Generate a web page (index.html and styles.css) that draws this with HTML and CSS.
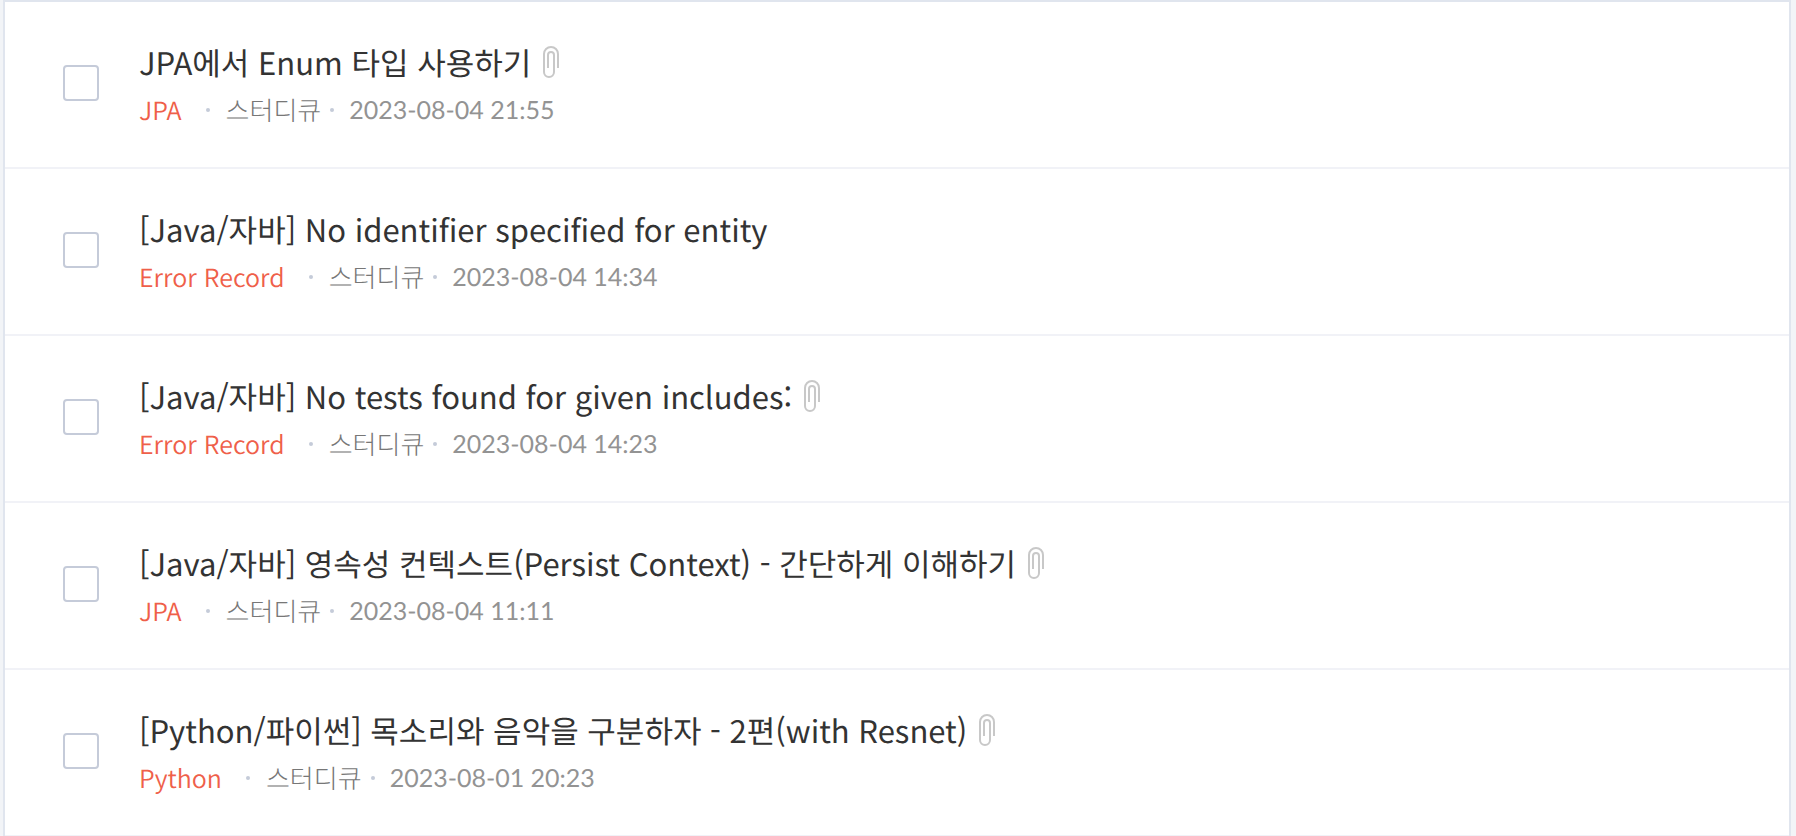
FILE: index.html
```html
<!DOCTYPE html>
<html lang="ko">
<head>
<meta charset="utf-8">
<title>글 관리</title>
<link rel="stylesheet" href="styles.css">
</head>
<body>
<svg class="sprite" aria-hidden="true">
  <symbol id="clip" viewBox="0 0 16 32">
    <path d="M15 22V8A7 7 0 0 0 1 8V26A5 5 0 0 0 11 26V9A3 3 0 0 0 5 9V22"/>
  </symbol>
</svg>
<ul class="posts">
  <li class="post">
    <input class="check" type="checkbox" aria-labelledby="post-1">
    <div class="body">
      <div class="head">
        <a class="title" id="post-1" href="#">JPA에서 Enum 타입 사용하기</a>
        <svg class="clip" aria-hidden="true"><use href="#clip"/></svg>
      </div>
      <div class="meta">
        <a class="cat" href="#">JPA</a>
        <span class="author">스터디큐</span>
        <span class="date">2023-08-04 21:55</span>
      </div>
    </div>
  </li>
  <li class="post">
    <input class="check" type="checkbox" aria-labelledby="post-2">
    <div class="body">
      <div class="head">
        <a class="title" id="post-2" href="#">[Java/자바] No identifier specified for entity</a>
      </div>
      <div class="meta">
        <a class="cat" href="#">Error Record</a>
        <span class="author">스터디큐</span>
        <span class="date">2023-08-04 14:34</span>
      </div>
    </div>
  </li>
  <li class="post">
    <input class="check" type="checkbox" aria-labelledby="post-3">
    <div class="body">
      <div class="head">
        <a class="title" id="post-3" href="#">[Java/자바] No tests found for given includes:</a>
        <svg class="clip" aria-hidden="true"><use href="#clip"/></svg>
      </div>
      <div class="meta">
        <a class="cat" href="#">Error Record</a>
        <span class="author">스터디큐</span>
        <span class="date">2023-08-04 14:23</span>
      </div>
    </div>
  </li>
  <li class="post">
    <input class="check" type="checkbox" aria-labelledby="post-4">
    <div class="body">
      <div class="head">
        <a class="title" id="post-4" href="#">[Java/자바] 영속성 컨텍스트(Persist Context) - 간단하게 이해하기</a>
        <svg class="clip" aria-hidden="true"><use href="#clip"/></svg>
      </div>
      <div class="meta">
        <a class="cat" href="#">JPA</a>
        <span class="author">스터디큐</span>
        <span class="date">2023-08-04 11:11</span>
      </div>
    </div>
  </li>
  <li class="post">
    <input class="check" type="checkbox" aria-labelledby="post-5">
    <div class="body">
      <div class="head">
        <a class="title" id="post-5" href="#">[Python/파이썬] 목소리와 음악을 구분하자 - 2편(with Resnet)</a>
        <svg class="clip" aria-hidden="true"><use href="#clip"/></svg>
      </div>
      <div class="meta">
        <a class="cat" href="#">Python</a>
        <span class="author">스터디큐</span>
        <span class="date">2023-08-01 20:23</span>
      </div>
    </div>
  </li>
</ul>
</body>
</html>
```
FILE: styles.css
```css
* { box-sizing: border-box; }
body {
  margin: 0;
  padding: 0 5px 0 3px;
  background: #f2f4f7;
  font-family: "Noto Sans CJK KR", "Noto Sans", sans-serif;
  text-rendering: geometricPrecision;
}
.sprite { position: absolute; width: 0; height: 0; }
.posts {
  margin: 0;
  padding: 0;
  list-style: none;
  background: #fff;
  border: 2px solid #e0e5ee;
  border-bottom: 0;
}
.post {
  display: flex;
  align-items: flex-start;
  gap: 40px;
  padding: 34px 58px 35px;
  border-bottom: 2px solid #f1f2f7;
}
.check {
  appearance: none;
  flex: none;
  width: 36px;
  height: 36px;
  margin: 29px 0 0;
  border: 2px solid #c5cbd9;
  border-radius: 4px;
  background: #fff;
}
.check:checked { background: #c5cbd9; }
.head { display: flex; align-items: center; gap: 12px; }
.title { font-size: 31px; line-height: 52px; color: #333; text-decoration: none; }
.clip {
  flex: none;
  width: 16px;
  height: 32px;
  fill: none;
  stroke: #c8c8c8;
  stroke-width: 2;
}
.meta {
  display: flex;
  align-items: center;
  font-size: 25px;
  line-height: 44px;
  color: #888;
  font-weight: 350;
}
.cat { color: #ef5f4a; text-decoration: none; }
.author, .date { display: flex; align-items: center; }
.author { font-size: 26px; font-weight: 300; color: #777; }
.author::before, .date::before {
  content: "";
  width: 4px;
  height: 4px;
  border-radius: 50%;
  background: #c5cbd9;
}
.author::before { margin: 0 16px 0 24px; }
.date::before { margin: 0 15px 0 9px; }
.date { font-family: Lato, "Noto Sans", sans-serif; font-weight: 400; color: #939393; }
```
